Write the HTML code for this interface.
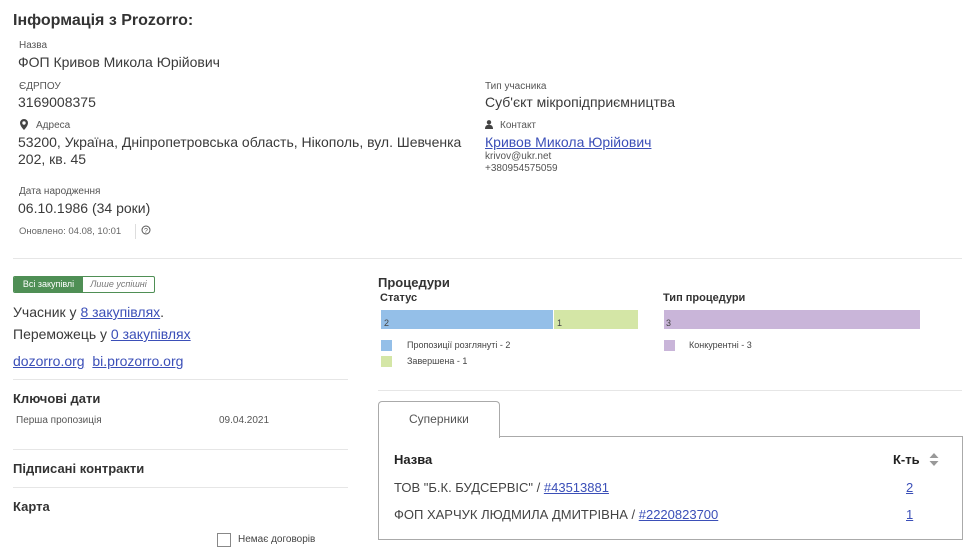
<!DOCTYPE html>
<html><head><meta charset="utf-8"><style>
body{margin:0;width:976px;height:552px;background:#fff;font-family:"Liberation Sans",sans-serif;color:#333;position:relative;overflow:hidden}
.a{position:absolute;white-space:nowrap}
.l{font-size:10px;color:#555}
.v{font-size:14px;color:#3a3a3a}
.b{font-weight:bold}
a{color:#3b4fb8;text-decoration:underline}
.hr{position:absolute;height:1px;background:#e6e6e6}
.sq{position:absolute;width:11px;height:11px}
.s{font-size:9px;color:#444}
</style></head><body>
<div class="a b" style="left:13px;top:12px;font-size:16px;color:#333">Інформація з Prozorro:</div>
<div class="a l" style="left:19px;top:40px">Назва</div>
<div class="a v" style="left:18px;top:54px">ФОП Кривов Микола Юрійович</div>
<div class="a l" style="left:19px;top:81px">ЄДРПОУ</div>
<div class="a v" style="left:18px;top:94px">3169008375</div>
<svg class="a" style="left:20px;top:119px" width="8" height="11" viewBox="0 0 8 11"><path d="M4 0a4 4 0 0 0-4 4c0 3 4 7 4 7s4-4 4-7a4 4 0 0 0-4-4zm0 2.3a1.7 1.7 0 1 1 0 3.4a1.7 1.7 0 0 1 0-3.4z" fill="#444"/></svg>
<div class="a l" style="left:36px;top:120px">Адреса</div>
<div class="a v" style="left:18px;top:134px;line-height:17px">53200, Україна, Дніпропетровська область, Нікополь, вул. Шевченка<br>202, кв. 45</div>
<div class="a l" style="left:19px;top:186px">Дата народження</div>
<div class="a v" style="left:18px;top:200px">06.10.1986 (34 роки)</div>
<div class="a" style="left:19px;top:226px;font-size:9.5px;color:#666">Оновлено: 04.08, 10:01</div>
<div class="a" style="left:135px;top:224px;width:1px;height:15px;background:#ddd"></div>
<svg class="a" style="left:141px;top:225px" width="10" height="10"><circle cx="5" cy="5" r="4" fill="none" stroke="#555" stroke-width="1"/><text x="5" y="8" font-size="7" text-anchor="middle" fill="#555" font-family="Liberation Sans">?</text></svg>

<div class="a l" style="left:485px;top:81px">Тип учасника</div>
<div class="a v" style="left:485px;top:94px">Суб'єкт мікропідприємництва</div>
<svg class="a" style="left:485px;top:120px" width="8" height="9"><circle cx="4" cy="2.3" r="2.2" fill="#444"/><path d="M0 9c0-3 1.5-4.3 4-4.3S8 6 8 9z" fill="#444"/></svg>
<div class="a l" style="left:500px;top:120px">Контакт</div>
<div class="a v" style="left:485px;top:134px"><a>Кривов Микола Юрійович</a></div>
<div class="a" style="left:485px;top:151px;font-size:10px;color:#555">krivov@ukr.net</div>
<div class="a" style="left:485px;top:163px;font-size:10px;color:#555">+380954575059</div>

<div class="hr" style="left:13px;top:258px;width:949px"></div>

<div class="a" style="left:13px;top:276px;width:140px;height:15px;border:1px solid #4f8f55;border-radius:2px;overflow:hidden;font-size:9px">
<div class="a" style="left:0;top:0;width:69px;height:15px;background:#4f8f55;color:#fff;line-height:15px;text-align:center">Всі закупівлі</div>
<div class="a" style="left:69px;top:0;width:71px;height:15px;color:#777;line-height:15px;text-align:center;font-style:italic">Лише успішні</div></div>
<div class="a v" style="left:13px;top:304px">Учасник у <a>8 закупівлях</a>.</div>
<div class="a v" style="left:13px;top:326px">Переможець у <a>0 закупівлях</a></div>
<div class="a v" style="left:13px;top:353px"><a>dozorro.org</a> &nbsp;<a>bi.prozorro.org</a></div>
<div class="hr" style="left:13px;top:379px;width:335px"></div>
<div class="a b" style="left:13px;top:391px;font-size:13px">Ключові дати</div>
<div class="a l" style="left:16px;top:415px">Перша пропозиція</div>
<div class="a l" style="left:219px;top:415px">09.04.2021</div>
<div class="hr" style="left:13px;top:449px;width:335px"></div>
<div class="a b" style="left:13px;top:461px;font-size:13px">Підписані контракти</div>
<div class="hr" style="left:13px;top:487px;width:335px"></div>
<div class="a b" style="left:13px;top:499px;font-size:13px">Карта</div>
<div class="a" style="left:217px;top:533px;width:12px;height:12px;border:1px solid #888"></div>
<div class="a" style="left:238px;top:534px;font-size:10px;color:#444">Немає договорів</div>

<div class="a b" style="left:378px;top:275px;font-size:13px">Процедури</div>
<div class="a b" style="left:380px;top:292px;font-size:11px">Статус</div>
<div class="a b" style="left:663px;top:292px;font-size:11px">Тип процедури</div>
<div class="a" style="left:381px;top:310px;width:172px;height:19px;background:#94bfe8"></div>
<div class="a" style="left:554px;top:310px;width:84px;height:19px;background:#d4e6a6"></div>
<div class="a" style="left:664px;top:310px;width:256px;height:19px;background:#c9b5d9"></div>
<div class="a s" style="left:384px;top:318px">2</div>
<div class="a s" style="left:557px;top:318px">1</div>
<div class="a s" style="left:666px;top:318px">3</div>
<div class="sq" style="left:381px;top:340px;background:#94bfe8"></div>
<div class="sq" style="left:381px;top:356px;background:#d4e6a6"></div>
<div class="sq" style="left:664px;top:340px;background:#c9b5d9"></div>
<div class="a s" style="left:407px;top:340px">Пропозиції розглянуті - 2</div>
<div class="a s" style="left:407px;top:356px">Завершена - 1</div>
<div class="a s" style="left:689px;top:340px">Конкурентні - 3</div>
<div class="hr" style="left:378px;top:390px;width:584px"></div>

<div class="a" style="left:378px;top:436px;width:583px;height:102px;border:1px solid #aaa"></div>
<div class="a" style="left:378px;top:401px;width:120px;height:36px;border:1px solid #aaa;border-bottom:none;border-radius:4px 4px 0 0;background:#fff"></div>
<div class="a" style="left:409px;top:412px;font-size:12px;color:#555">Суперники</div>
<div class="a b" style="left:394px;top:452px;font-size:13px;color:#222">Назва</div>
<div class="a b" style="left:893px;top:452px;font-size:13px;color:#222">К-ть</div>
<svg class="a" style="left:929px;top:453px" width="10" height="13"><path d="M5 0L9.5 5H.5z M5 13L9.5 8H.5z" fill="#999"/></svg>
<div class="a" style="left:394px;top:480px;font-size:13px;color:#444">ТОВ "Б.К. БУДСЕРВІС" / <a>#43513881</a></div>
<div class="a" style="left:394px;top:507px;font-size:13px;color:#444">ФОП ХАРЧУК ЛЮДМИЛА ДМИТРІВНА / <a>#2220823700</a></div>
<div class="a" style="left:906px;top:480px;font-size:13px"><a>2</a></div>
<div class="a" style="left:906px;top:507px;font-size:13px"><a>1</a></div>
</body></html>
